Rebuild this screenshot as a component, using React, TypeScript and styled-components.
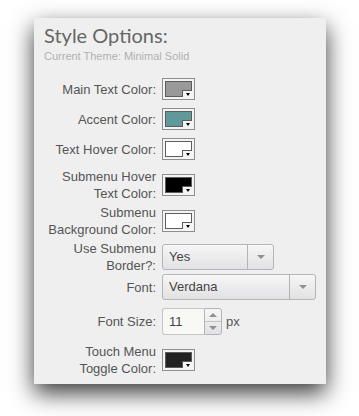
import React from "react";
import styled, { createGlobalStyle } from "styled-components";

const Global = createGlobalStyle`
  html, body { margin: 0; padding: 0; background: #ffffff; }
  body { font-family: "Liberation Sans", Arial, sans-serif; }
`;

const Page = styled.div`
  padding: 18px 0 40px 34px;
`;

const Panel = styled.div`
  box-sizing: border-box;
  width: 292px;
  height: 366px;
  background: #efefef;
  box-shadow: 0 9px 22px rgba(0, 0, 0, 0.78);
  padding: 5px 10px 12px 10px;
  display: flex;
  flex-direction: column;
`;

const Title = styled.h2`
  margin: 0;
  font-family: "Lato", sans-serif;
  font-weight: 400;
  font-size: 20px;
  line-height: 24px;
  color: #666666;
`;

const Subtitle = styled.div`
  margin-top: 3px;
  font-size: 11px;
  line-height: 13px;
  color: #b0b0b0;
`;

const Form = styled.div`
  margin-top: 15px;
  display: flex;
  flex-direction: column;
  gap: 8px;
`;

const Row = styled.div<{ $h: number }>`
  display: grid;
  grid-template-columns: 112px auto;
  column-gap: 6px;
  align-items: center;
  height: ${(p) => p.$h}px;
`;

const Label = styled.div`
  text-align: right;
  font-size: 13px;
  line-height: 17px;
  color: #555555;
`;

const Control = styled.div`
  display: flex;
  align-items: center;
`;

const Swatch = styled.div`
  position: relative;
  box-sizing: border-box;
  width: 33px;
  height: 22px;
  border: 1px solid #8e8e8e;
  background: #f4f4f4;
  padding: 2px;
`;

const SwatchFill = styled.div<{ $c: string }>`
  box-sizing: border-box;
  width: 100%;
  height: 100%;
  background: ${(p) => p.$c};
  border: 1px solid #5c5c5c;
`;

const SwatchNotch = styled.div`
  position: absolute;
  right: 2px;
  bottom: 2px;
  box-sizing: border-box;
  width: 10px;
  height: 7px;
  background: #f4f4f4;
  border-top: 1px solid #5c5c5c;
  border-left: 1px solid #5c5c5c;
  display: flex;
  align-items: flex-end;
  justify-content: center;
  padding-bottom: 1px;
`;

const Tri = styled.div`
  width: 0;
  height: 0;
  border-left: 2.5px solid transparent;
  border-right: 2.5px solid transparent;
  border-top: 3px solid #000;
`;

const Select = styled.div<{ $w: number }>`
  box-sizing: border-box;
  width: ${(p) => p.$w}px;
  height: 26px;
  border: 1px solid #b4b4b6;
  border-radius: 3px;
  background: linear-gradient(#f6f6f6, #e2e2e4);
  box-shadow: inset 0 1px 0 #fbfbfb;
  display: flex;
  align-items: stretch;
`;

const SelectText = styled.div`
  flex: 1;
  padding-left: 6px;
  font-size: 13px;
  line-height: 24px;
  color: #444444;
`;

const SelectArrow = styled.div`
  width: 25px;
  border-left: 1px solid #b4b4b6;
  display: flex;
  align-items: center;
  justify-content: center;
`;

const GrayTri = styled.div<{ $up?: boolean }>`
  width: 0;
  height: 0;
  border-left: 4px solid transparent;
  border-right: 4px solid transparent;
  ${(p) => (p.$up ? "border-bottom" : "border-top")}: 4px solid #8f8f8f;
`;

const NumberBox = styled.div`
  display: flex;
  height: 27px;
`;

const NumberField = styled.div`
  box-sizing: border-box;
  width: 42px;
  height: 27px;
  border: 1px solid #c6c6c6;
  border-right: none;
  border-radius: 3px 0 0 3px;
  background: #f8f8f4;
  padding-left: 6px;
  font-size: 13px;
  line-height: 25px;
  color: #444444;
`;

const Spinner = styled.div`
  box-sizing: border-box;
  width: 18px;
  height: 27px;
  border: 1px solid #b4b4b6;
  border-radius: 0 3px 3px 0;
  background: linear-gradient(#f6f6f6, #e2e2e4);
  display: flex;
  flex-direction: column;
`;

const SpinHalf = styled.div<{ $top?: boolean }>`
  flex: 1;
  display: flex;
  align-items: center;
  justify-content: center;
  ${(p) => (p.$top ? "border-bottom: 1px solid #c2c2c4;" : "")}
`;

const Unit = styled.span`
  margin-left: 4px;
  font-size: 13px;
  color: #555555;
`;

const ColorSwatch = ({ color }: { color: string }) => (
  <Swatch>
    <SwatchFill $c={color} />
    <SwatchNotch>
      <Tri />
    </SwatchNotch>
  </Swatch>
);

const Dropdown = ({ value, width }: { value: string; width: number }) => (
  <Select $w={width}>
    <SelectText>{value}</SelectText>
    <SelectArrow>
      <GrayTri />
    </SelectArrow>
  </Select>
);

export default function App() {
  return (
    <>
      <Global />
      <Page>
        <Panel>
          <Title>Style Options:</Title>
          <Subtitle>Current Theme: Minimal Solid</Subtitle>
          <Form>
            <Row $h={22}>
              <Label>Main Text Color:</Label>
              <Control>
                <ColorSwatch color="#999999" />
              </Control>
            </Row>
            <Row $h={22}>
              <Label>Accent Color:</Label>
              <Control>
                <ColorSwatch color="#5f9999" />
              </Control>
            </Row>
            <Row $h={22}>
              <Label>Text Hover Color:</Label>
              <Control>
                <ColorSwatch color="#ffffff" />
              </Control>
            </Row>
            <Row $h={28}>
              <Label>
                Submenu Hover
                <br />
                Text Color:
              </Label>
              <Control>
                <ColorSwatch color="#000000" />
              </Control>
            </Row>
            <Row $h={28}>
              <Label>
                Submenu
                <br />
                Background Color:
              </Label>
              <Control>
                <ColorSwatch color="#ffffff" />
              </Control>
            </Row>
            <Row $h={26}>
              <Label>
                Use Submenu
                <br />
                Border?:
              </Label>
              <Control>
                <Dropdown value="Yes" width={112} />
              </Control>
            </Row>
            <Row $h={26}>
              <Label>Font:</Label>
              <Control>
                <Dropdown value="Verdana" width={154} />
              </Control>
            </Row>
            <Row $h={27}>
              <Label>Font Size:</Label>
              <Control>
                <NumberBox>
                  <NumberField>11</NumberField>
                  <Spinner>
                    <SpinHalf $top>
                      <GrayTri $up />
                    </SpinHalf>
                    <SpinHalf>
                      <GrayTri />
                    </SpinHalf>
                  </Spinner>
                </NumberBox>
                <Unit>px</Unit>
              </Control>
            </Row>
            <Row $h={28}>
              <Label>
                Touch Menu
                <br />
                Toggle Color:
              </Label>
              <Control>
                <ColorSwatch color="#222222" />
              </Control>
            </Row>
          </Form>
        </Panel>
      </Page>
    </>
  );
}
